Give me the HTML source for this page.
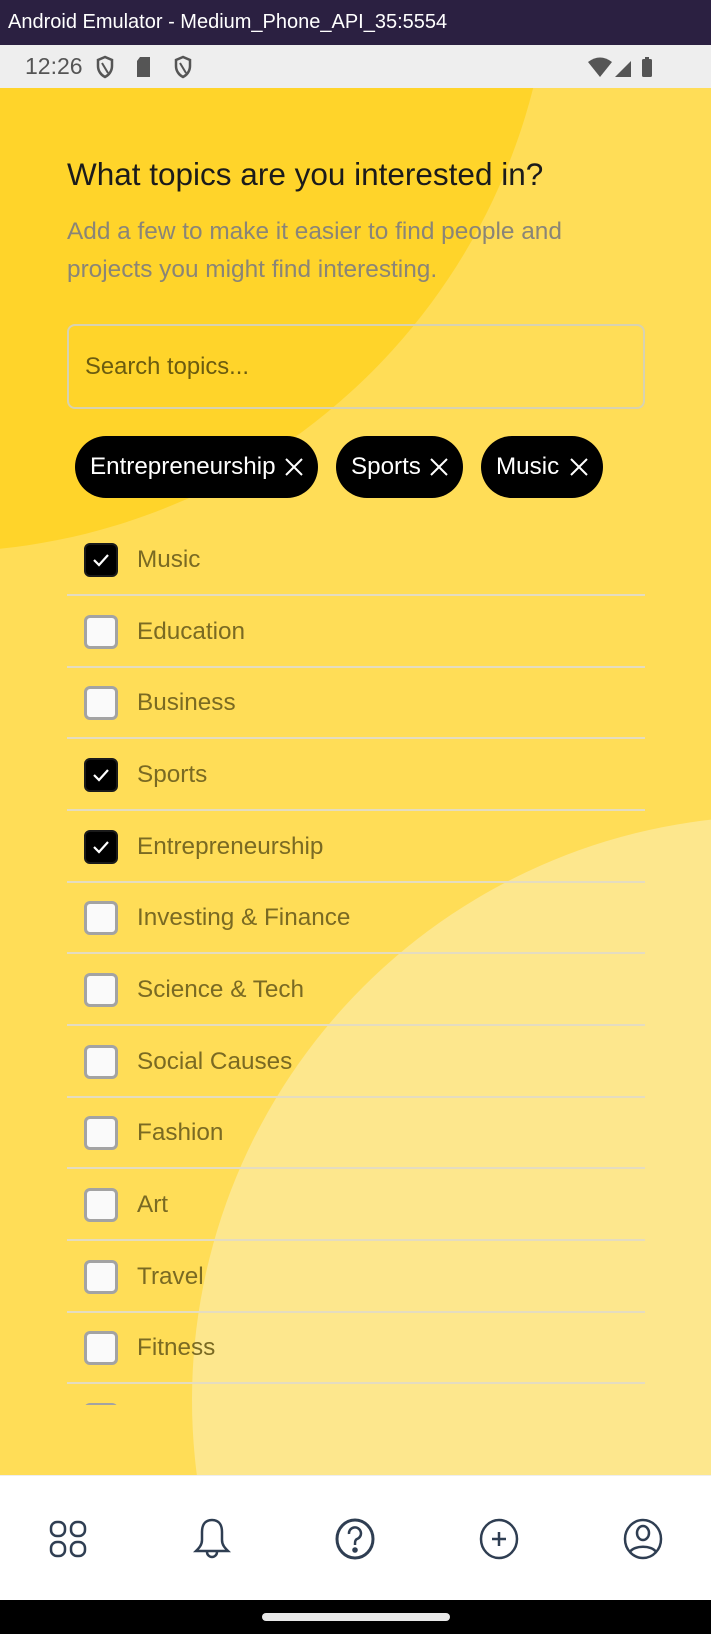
<!DOCTYPE html>
<html><head><meta charset="utf-8"><style>
*{margin:0;padding:0;box-sizing:border-box}
body{width:711px;height:1634px;position:relative;overflow:hidden;font-family:"Liberation Sans",Roboto,sans-serif;background:#ffdd57}
.abs{position:absolute}
#tb{left:0;top:0;width:711px;height:45px;background:#2b2041;color:#fff;font-size:20px;line-height:45px;padding-left:8px}
#sb{left:0;top:45px;width:711px;height:43px;background:#eeeeee;color:#555;font-size:23px;line-height:43px}
#main{left:0;top:88px;width:711px;height:1387px;overflow:hidden;background:#ffdd57}
.circ{position:absolute;border-radius:50%}
.t{color:#1b1b1b;font-size:31.5px}
.sub{color:#8a8577;font-size:24.4px;line-height:38px}
#search{left:67px;top:324px;width:578px;height:85px;border:2px solid #d8d2b0;border-radius:8px;font-size:23.8px;color:#6b5c10;padding:27px 0 0 16px}
.chip{position:absolute;top:436px;height:62px;background:#000;color:#fff;border-radius:31px;font-size:24.2px;line-height:62px;padding-left:15px}
.chip svg{position:absolute;top:21px;right:14px}
.row{position:absolute;left:67px;width:578px;height:72px;border-bottom:2px solid #e4dcc0}
.cb{position:absolute;left:17px;top:19px;width:34px;height:34px;border-radius:6px;background:#fafafa;border:3px solid #a3a3a3}
.cb.on{background:#000;border:2px solid #1a1a1a}
.lbl{position:absolute;left:70px;top:0;line-height:72px;font-size:24.3px;color:#7a6a23}
#nav{left:0;top:1475px;width:711px;height:125px;background:#fff;border-top:1px solid #eee}
#bot{left:0;top:1600px;width:711px;height:34px;background:#000}
</style></head><body>
<div id="tb" class="abs">Android Emulator - Medium_Phone_API_35:5554</div>
<div id="sb" class="abs"><span style="position:absolute;left:25px">12:26</span>
<svg class="abs" style="left:95px;top:10px" width="20" height="24" viewBox="0 0 20 24"><path d="M10 2L3 5v6c0 5 3 9 7 11 4-2 7-6 7-11V5z" fill="none" stroke="#555" stroke-width="2.5"/><path d="M7 8l6 10" stroke="#555" stroke-width="2"/></svg>
<svg class="abs" style="left:135px;top:11px" width="18" height="22"><path d="M5 1h10v20H2V5z" fill="#555"/></svg>
<svg class="abs" style="left:173px;top:10px" width="20" height="24" viewBox="0 0 20 24"><path d="M10 2L3 5v6c0 5 3 9 7 11 4-2 7-6 7-11V5z" fill="none" stroke="#555" stroke-width="2.5"/><path d="M7 8l6 10" stroke="#555" stroke-width="2"/></svg>
<svg class="abs" style="left:588px;top:11px" width="80" height="22"><path d="M0 6Q12-3 24 6L12 21z" fill="#555"/><path d="M27 21L43 5v16z" fill="#555"/><rect x="54" y="3" width="10" height="18" rx="1.5" fill="#555"/><rect x="57" y="1" width="4" height="3" fill="#555"/></svg>
</div>
<div id="main" class="abs">
<div class="circ" style="left:-678px;top:-766px;width:1230px;height:1230px;background:#ffd42a"></div>
<div class="circ" style="left:192px;top:728px;width:1168px;height:1168px;background:#fde78d"></div>
</div>
<div class="abs t" style="left:67px;top:156px">What topics are you interested in?</div>
<div class="abs sub" style="left:67px;top:213px">Add a few to make it easier to find people and<br>projects you might find interesting.</div>
<div id="search" class="abs">Search topics...</div>
<div class="chip" style="left:75px;width:243px">Entrepreneurship<svg width="20" height="20"><path d="M2 2l16 16M18 2L2 18" stroke="#fff" stroke-width="2"/></svg></div>
<div class="chip" style="left:336px;width:127px">Sports<svg width="20" height="20"><path d="M2 2l16 16M18 2L2 18" stroke="#fff" stroke-width="2"/></svg></div>
<div class="chip" style="left:481px;width:122px">Music<svg width="20" height="20"><path d="M2 2l16 16M18 2L2 18" stroke="#fff" stroke-width="2"/></svg></div>
<div class="abs" style="left:0;top:524px;width:711px;height:881px;overflow:hidden">
<div class="row" style="top:0"><div class="cb on"><svg width="30" height="30"><path d="M8 15l5 5 9-10" fill="none" stroke="#fff" stroke-width="2.2"/></svg></div><div class="lbl">Music</div></div>
<div class="row" style="top:72px"><div class="cb"></div><div class="lbl">Education</div></div>
<div class="row" style="top:143px"><div class="cb"></div><div class="lbl">Business</div></div>
<div class="row" style="top:215px"><div class="cb on"><svg width="30" height="30"><path d="M8 15l5 5 9-10" fill="none" stroke="#fff" stroke-width="2.2"/></svg></div><div class="lbl">Sports</div></div>
<div class="row" style="top:287px"><div class="cb on"><svg width="30" height="30"><path d="M8 15l5 5 9-10" fill="none" stroke="#fff" stroke-width="2.2"/></svg></div><div class="lbl">Entrepreneurship</div></div>
<div class="row" style="top:358px"><div class="cb"></div><div class="lbl">Investing &amp; Finance</div></div>
<div class="row" style="top:430px"><div class="cb"></div><div class="lbl">Science &amp; Tech</div></div>
<div class="row" style="top:502px"><div class="cb"></div><div class="lbl">Social Causes</div></div>
<div class="row" style="top:573px"><div class="cb"></div><div class="lbl">Fashion</div></div>
<div class="row" style="top:645px"><div class="cb"></div><div class="lbl">Art</div></div>
<div class="row" style="top:717px"><div class="cb"></div><div class="lbl">Travel</div></div>
<div class="row" style="top:788px"><div class="cb"></div><div class="lbl">Fitness</div></div>
<div class="row" style="top:860px"><div class="cb"></div><div class="lbl">Food</div></div>
</div>
<div id="nav" class="abs">
<svg class="abs" style="left:48px;top:43px" width="40" height="40" viewBox="0 0 40 40" fill="none" stroke="#2f3e52" stroke-width="2.5"><rect x="3" y="3" width="14" height="14" rx="6"/><rect x="23" y="3" width="14" height="14" rx="6"/><rect x="3" y="23" width="14" height="14" rx="6"/><rect x="23" y="23" width="14" height="14" rx="6"/></svg>
<svg class="abs" style="left:191px;top:41px" width="42" height="46" viewBox="0 0 42 46" fill="none" stroke="#2f3e52" stroke-width="2.5"><path d="M21 3c-7 0-10 5-10 12v8c0 5-3 8-6 11h32c-3-3-6-6-6-11v-8c0-7-3-12-10-12z"/><path d="M16 35a5 5 0 0 0 10 0"/></svg>
<svg class="abs" style="left:334px;top:41px" width="42" height="44" viewBox="0 0 42 44" fill="none" stroke="#2f3e52" stroke-width="3"><ellipse cx="21" cy="22" rx="18" ry="19"/><path d="M15 17a6 6 0 1 1 8 5c-2 1-2 3-2 6" stroke-width="2.5"/><circle cx="21" cy="33" r="1.3" fill="#2f3e52"/></svg>
<svg class="abs" style="left:479px;top:42px" width="40" height="42" viewBox="0 0 40 42" fill="none" stroke="#2f3e52" stroke-width="2.5"><ellipse cx="20" cy="21" rx="18" ry="19"/><path d="M20 14v14M13 21h14"/></svg>
<svg class="abs" style="left:623px;top:42px" width="40" height="42" viewBox="0 0 40 42" fill="none" stroke="#2f3e52" stroke-width="2.5"><ellipse cx="20" cy="21" rx="18" ry="19"/><ellipse cx="20" cy="15" rx="6" ry="7"/><path d="M7 34c4-7 22-7 26 0"/></svg>
</div>
<div id="bot" class="abs"><div class="abs" style="left:262px;top:13px;width:188px;height:8px;border-radius:4px;background:#e8e8e8"></div></div>
</body></html>
